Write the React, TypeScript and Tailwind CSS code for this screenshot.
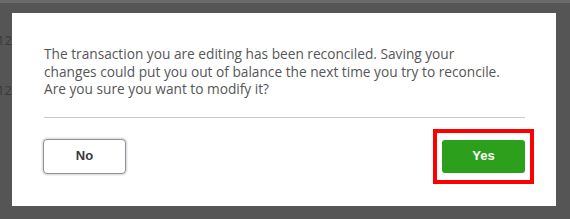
export default function App() {
  return (
    <div className="w-[570px] h-[219px] overflow-hidden relative bg-[#555555] pl-[12px] pt-[13px] font-['Open_Sans',sans-serif]">
      {/* faint spreadsheet behind the overlay */}
      <div className="absolute inset-x-0 top-0 h-[3px] bg-[#6a6a6a]" />
      <span className="absolute left-[-3px] top-[31px] text-[13px] text-[#3a3a3a]">12</span>
      <span className="absolute left-[-3px] top-[81px] text-[13px] text-[#3a3a3a]">12</span>

      <div className="relative w-[544px] h-[193px] bg-white flex flex-col px-[32px] pt-[32px]">
        <p className="text-[13.7px] leading-[17.5px] text-[#555658]">
          The transaction you are editing has been reconciled. Saving your
          <br />
          changes could put you out of balance the next time you try to reconcile.
          <br />
          Are you sure you want to modify it?
        </p>
        <div className="mt-[19px] h-px w-[481px] bg-[#c9c9c9]" />
        <div className="mt-[21px] flex items-center justify-between w-[481px]">
          <button className="ml-[-1px] w-[83px] h-[35px] rounded-[4px] border border-[#8d9096] bg-white shadow-[0_0_0_1.5px_#e3e4e6] font-['Liberation_Sans',sans-serif] font-bold text-[13px] text-[#393a3d]">
            No
          </button>
          <div className="relative">
            <button className="w-[83px] h-[33px] rounded-[3px] bg-[#2ca01c] font-['Liberation_Sans',sans-serif] font-bold text-[13px] text-white">
              Yes
            </button>
            <div className="absolute left-[-9px] top-[-11px] w-[101px] h-[55px] border-[4px] border-[#ff0000]" />
          </div>
        </div>
      </div>
    </div>
  );
}
